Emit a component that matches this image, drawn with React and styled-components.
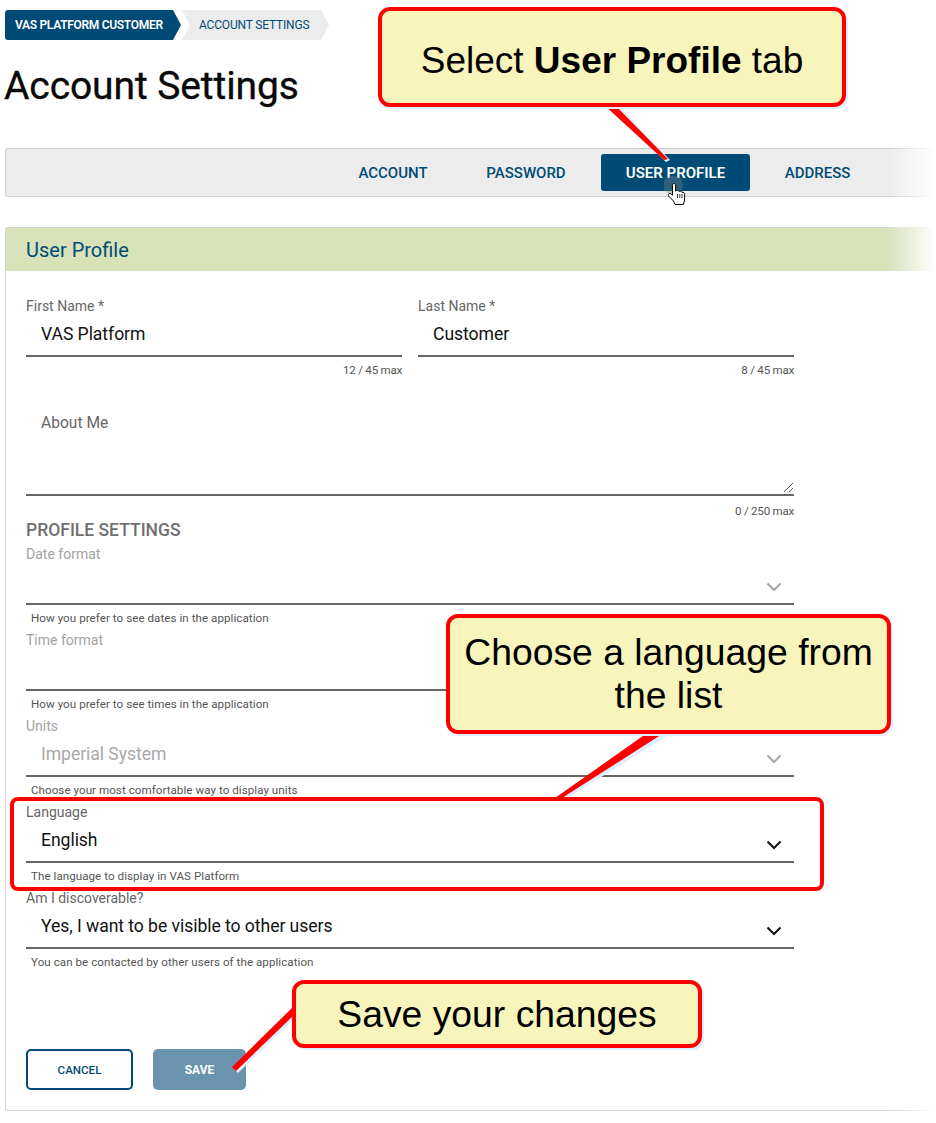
import React from "react";
import styled, { createGlobalStyle } from "styled-components";

const GlobalStyle = createGlobalStyle`
  html, body {
    margin: 0;
    padding: 0;
    background: #fff;
    overflow: hidden;
  }
  * { box-sizing: border-box; }
`;

const Page = styled.div`
  position: relative;
  width: 936px;
  height: 1123px;
  padding: 10px 0 0 5px;
  overflow: hidden;
  font-family: "Roboto", "Liberation Sans", sans-serif;
`;

const Breadcrumbs = styled.div`
  display: flex;
  height: 30px;
`;

const Crumb = styled.div`
  display: flex;
  align-items: center;
  height: 30px;
  font-size: 12px;
  font-weight: ${(p) => (p.$active ? 600 : 400)};
  letter-spacing: ${(p) => (p.$active ? "-0.3px" : "-0.18px")};
  color: ${(p) => (p.$active ? "#fff" : "#004b75")};
  background: ${(p) => (p.$active ? "#004b75" : "#ececec")};
  width: ${(p) => (p.$active ? "176px" : "147px")};
  padding-left: ${(p) => (p.$active ? "10px" : "17px")};
  border-radius: ${(p) => (p.$active ? "3px 0 0 3px" : "0")};
  margin-left: ${(p) => (p.$active ? "0" : "1px")};
  clip-path: ${(p) =>
    p.$active
      ? "polygon(0 0, 168px 0, 100% 50%, 168px 100%, 0 100%)"
      : "polygon(0 0, 139px 0, 100% 50%, 139px 100%, 0 100%, 8px 50%)"};
`;

const Title = styled.h1`
  margin: 22px 0 37px -1px;
  font-size: 39px;
  line-height: 49px;
  font-weight: 400;
  color: #0a0a0a;
  letter-spacing: -0.1px;
  -webkit-text-stroke: 0.35px #0a0a0a;
`;

const TabBar = styled.div`
  position: relative;
  display: flex;
  align-items: center;
  height: 49px;
  padding-left: 326px;
  background: #ececec;
  border: 1px solid #cdcdcd;
  border-right: 0;
  border-radius: 3px 0 0 3px;

  &:after {
    content: "";
    position: absolute;
    top: -1px;
    bottom: -1px;
    right: 0;
    width: 50px;
    background: linear-gradient(to right, rgba(255, 255, 255, 0), #fff);
  }
`;

const Tab = styled.div`
  display: flex;
  align-items: center;
  justify-content: center;
  width: ${(p) => p.$width}px;
  height: 37px;
  font-size: 15px;
  font-weight: ${(p) => (p.$active ? 600 : 500)};
  color: ${(p) => (p.$active ? "#fff" : "#004b75")};
  background: ${(p) => (p.$active ? "#004b75" : "transparent")};
  border-radius: 3px;
  margin-right: ${(p) => p.$gap || 0}px;
`;

const Panel = styled.section`
  position: relative;
  margin-top: 30px;
  height: 884px;
  border: 1px solid #d4d4d4;
  border-right: 0;
  border-radius: 3px 0 0 3px;

  &:after {
    content: "";
    position: absolute;
    top: -1px;
    bottom: -1px;
    right: 0;
    width: 50px;
    background: linear-gradient(to right, rgba(255, 255, 255, 0), #fff);
  }
`;

const PanelHeader = styled.div`
  display: flex;
  align-items: center;
  height: 43px;
  padding-left: 20px;
  background: #d7e2b9;
  font-size: 20px;
  color: #004b75;
`;

const PanelBody = styled.div`
  width: 788px;
  padding: 27px 0 0 20px;
`;

const NameRow = styled.div`
  display: flex;
  gap: 16px;
`;

const NameField = styled.div`
  flex: ${(p) => (p.$wide ? "0 0 376px" : "1")};
`;

const Label = styled.div`
  font-size: 14px;
  line-height: 17px;
  color: ${(p) => (p.$muted ? "#a3a3a3" : "#666")};
`;

const InputBox = styled.div`
  display: flex;
  align-items: center;
  justify-content: space-between;
  height: 40px;
  margin-top: 2px;
  padding: 0 12px 4px 15px;
  border-bottom: 2px solid #666;
  font-size: 17.6px;
  letter-spacing: -0.06px;
  color: ${(p) => (p.$muted ? "#a8a8a8" : "#111")};
`;

const Counter = styled.div`
  height: 21px;
  font-size: 11.6px;
  letter-spacing: -0.25px;
  line-height: 26px;
  text-align: right;
  color: #555;
`;

const TextArea = styled.div`
  position: relative;
  margin: 16px 0 2px;
  height: 102px;
  padding: 19px 15px 0;
  border-bottom: 2px solid #666;
  font-size: 15.6px;
  line-height: 20px;
  color: #666;
`;

const Resizer = styled.svg`
  position: absolute;
  right: 0;
  bottom: 1px;
`;

const SectionTitle = styled.h2`
  height: 28px;
  margin: -1px 0 0;
  font-size: 17.5px;
  line-height: 24px;
  font-weight: 500;
  color: #6f6f6f;
`;

const SelectGroup = styled.div`
  height: 86px;
`;

const Help = styled.div`
  padding-left: 5px;
  font-size: 11.6px;
  letter-spacing: 0.05px;
  line-height: 27px;
  height: 27px;
  color: #555;
`;

const Chevron = styled.svg`
  flex: none;
  margin-top: 9px;
`;

const Buttons = styled.div`
  display: flex;
  gap: 20px;
  margin-top: 73px;
`;

const Button = styled.div`
  display: flex;
  align-items: center;
  justify-content: center;
  height: 41px;
  width: ${(p) => (p.$primary ? "93px" : "107px")};
  font-size: ${(p) => (p.$primary ? "12px" : "11.6px")};
  font-weight: ${(p) => (p.$primary ? 700 : 500)};
  color: ${(p) => (p.$primary ? "#fff" : "#004b75")};
  background: ${(p) => (p.$primary ? "#6a94ad" : "#fff")};
  border: ${(p) => (p.$primary ? "0" : "2px solid #004b75")};
  border-radius: 5px;
`;

const Pointers = styled.svg`
  position: absolute;
  left: 0;
  top: 0;
`;

const Callout = styled.div`
  position: absolute;
  left: ${(p) => p.$x}px;
  top: ${(p) => p.$y}px;
  width: ${(p) => p.$w}px;
  height: ${(p) => p.$h}px;
  display: flex;
  align-items: center;
  justify-content: center;
  text-align: center;
  padding: ${(p) => p.$shift || 0}px 8px 0;
  background: #f7f5bb;
  border: 4px solid #ff0000;
  border-radius: 12px;
  box-shadow: 2px 2px 0 #dcefff;
  font-family: "Liberation Sans", Arial, sans-serif;
  font-size: ${(p) => p.$size || 37.3}px;
  line-height: 43px;
  color: #000;
`;

const Highlight = styled.div`
  position: absolute;
  left: 10px;
  top: 797px;
  width: 814px;
  height: 94px;
  border: 4px solid #ff0000;
  border-radius: 8px;
`;

const Cursor = styled.svg`
  position: absolute;
  left: 664px;
  top: 176px;
`;

const ChevronIcon = ({ muted }) => (
  <Chevron width="16" height="10" viewBox="0 0 16 10">
    <path
      d="M1.5 1.5 L8 8 L14.5 1.5"
      fill="none"
      stroke={muted ? "#a8a8a8" : "#111"}
      strokeWidth="2"
    />
  </Chevron>
);

const SelectField = ({ label, value, help, muted }) => (
  <SelectGroup>
    <Label $muted={muted}>{label}</Label>
    <InputBox $muted={muted}>
      <span>{value}</span>
      <ChevronIcon muted={muted} />
    </InputBox>
    <Help>{help}</Help>
  </SelectGroup>
);

const App = () => {
  return (
    <Page>
      <GlobalStyle />
      <Breadcrumbs>
        <Crumb $active>VAS PLATFORM CUSTOMER</Crumb>
        <Crumb>ACCOUNT SETTINGS</Crumb>
      </Breadcrumbs>
      <Title>Account Settings</Title>

      <TabBar>
        <Tab $width={122} $gap={8}>ACCOUNT</Tab>
        <Tab $width={128} $gap={11}>PASSWORD</Tab>
        <Tab $width={149} $active>USER PROFILE</Tab>
        <Tab $width={135}>ADDRESS</Tab>
      </TabBar>

      <Panel>
        <PanelHeader>User Profile</PanelHeader>
        <PanelBody>
          <NameRow>
            <NameField $wide>
              <Label>First Name *</Label>
              <InputBox>VAS Platform</InputBox>
              <Counter>12 / 45 max</Counter>
            </NameField>
            <NameField>
              <Label>Last Name *</Label>
              <InputBox>Customer</InputBox>
              <Counter>8 / 45 max</Counter>
            </NameField>
          </NameRow>
          <TextArea>
            About Me
            <Resizer width="12" height="12" viewBox="0 0 12 12">
              <path d="M11 2 L2 11 M11 7 L7 11" stroke="#555" strokeWidth="1" />
            </Resizer>
          </TextArea>
          <Counter>0 / 250 max</Counter>
          <SectionTitle>PROFILE SETTINGS</SectionTitle>
          <SelectField muted label="Date format" value="" help="How you prefer to see dates in the application" />
          <SelectField muted label="Time format" value="" help="How you prefer to see times in the application" />
          <SelectField muted label="Units" value="Imperial System" help="Choose your most comfortable way to display units" />
          <SelectField label="Language" value="English" help="The language to display in VAS Platform" />
          <SelectField label="Am I discoverable?" value="Yes, I want to be visible to other users" help="You can be contacted by other users of the application" />
          <Buttons>
            <Button>CANCEL</Button>
            <Button $primary>SAVE</Button>
          </Buttons>
        </PanelBody>
      </Panel>

      <Pointers width="936" height="1123" viewBox="0 0 936 1123">
        <polygon points="606,104 617,104 670,160 666,162" fill="#dcefff" />
        <polygon points="652,733 672,733 566,799 558,799" fill="#dcefff" />
        <polygon points="296,1010 296,1017 238,1073 234,1069" fill="#dcefff" />
        <polygon points="603,104 614,104 668,159 664,160" fill="#ff0000" />
        <polygon points="650,731 667,731 562,798 555,798" fill="#ff0000" />
        <polygon points="294,1006 294,1015 236,1071 232,1067" fill="#ff0000" />
      </Pointers>

      <Callout $x={378} $y={7} $w={468} $h={100} $shift={6} $size={37}>
        <span>Select <b>User Profile</b> tab</span>
      </Callout>
      <Callout $x={446} $y={614} $w={445} $h={120}>
        Choose a language from the list
      </Callout>
      <Callout $x={292} $y={980} $w={410} $h={68}>
        Save your changes
      </Callout>
      <Highlight />

      <Cursor width="24" height="32" viewBox="0 0 24 32">
        <circle cx="9" cy="9" r="10" fill="#888" fillOpacity="0.35" />
        <path
          d="M8.5 9 C8.5 7 11.5 7 11.5 9 L11.5 15 C13 14 14.6 14.2 15 15.4 C16.4 14.6 17.8 15.2 18 16.4 C19.4 16 20.6 16.6 20.6 18.4 L20.6 24 L19.4 28.5 L11 28.5 L9.5 25 L5 20.4 C3.4 18.4 5.4 16.4 7 17.8 L8.5 19.4 Z"
          fill="#fff"
          stroke="#000"
          strokeWidth="1"
        />
        <path d="M13.5 18 L13.5 22 M15.8 18 L15.8 22 M18 18 L18 22" stroke="#000" strokeWidth="0.8" />
      </Cursor>
    </Page>
  );
};

export default App;
